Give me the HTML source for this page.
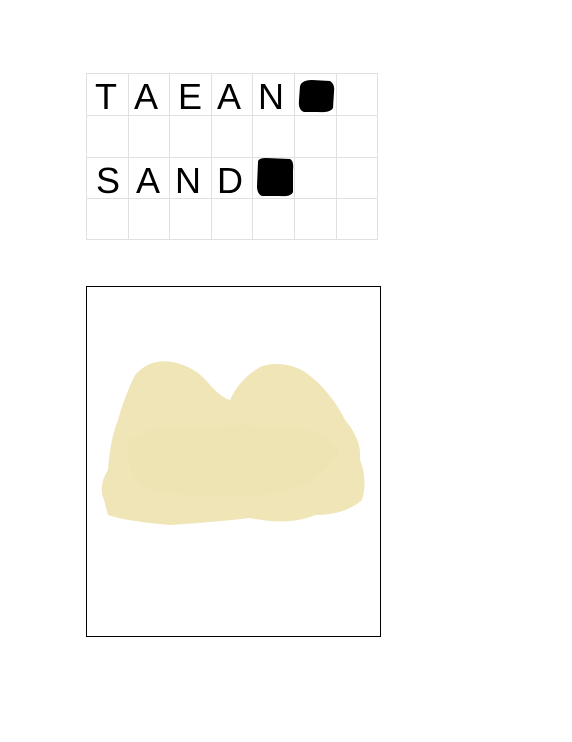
<!DOCTYPE html>
<html><head><style>
html,body{margin:0;padding:0;background:#fff;width:572px;height:742px;overflow:hidden}
</style></head><body>
<svg width="572" height="742" viewBox="0 0 572 742" xmlns="http://www.w3.org/2000/svg">
<g stroke="#e0e0e0" stroke-width="1" fill="none">
<rect x="86.5" y="73.5" width="291" height="166"/>
<line x1="128.5" y1="73" x2="128.5" y2="240"/>
<line x1="169.5" y1="73" x2="169.5" y2="240"/>
<line x1="211.5" y1="73" x2="211.5" y2="240"/>
<line x1="252.5" y1="73" x2="252.5" y2="240"/>
<line x1="294.5" y1="73" x2="294.5" y2="240"/>
<line x1="336.5" y1="73" x2="336.5" y2="240"/>
<line x1="86" y1="115.5" x2="378" y2="115.5"/>
<line x1="86" y1="157.5" x2="378" y2="157.5"/>
<line x1="86" y1="198.5" x2="378" y2="198.5"/>
</g>
<g font-family="Liberation Sans, sans-serif" font-size="36" fill="#000" text-anchor="middle">
<text x="106" y="109">T</text>
<text x="146" y="109">A</text>
<text x="190" y="109">E</text>
<text x="229" y="109">A</text>
<text x="271" y="109">N</text>
<text x="108" y="193">S</text>
<text x="148" y="193">A</text>
<text x="188" y="193">N</text>
<text x="230" y="193">D</text>
</g>
<path d="M300 86 Q302 80 312 80 L330 81 Q335 84 334 92 L333 108 Q330 113 318 112 L304 112 Q298 110 299 100 Z" fill="#000"/>
<path d="M258 162 Q258 158 266 158 L290 159 Q294 161 293 170 L293 192 Q291 197 280 196 L262 196 Q257 194 257 186 Z" fill="#000"/>
<rect x="86.5" y="286.5" width="294" height="350" fill="none" stroke="#000" stroke-width="1"/>
<path d="M104 500 Q98 485 108 470 Q110 440 118 420 Q125 395 135 375 Q150 358 172 362 Q195 366 210 385 Q222 398 230 400 Q240 378 262 366 Q285 360 305 372 Q330 390 345 420 Q362 440 360 460 Q368 480 362 500 Q345 515 315 515 Q290 526 250 518 Q215 522 170 525 Q130 522 108 515 Z" fill="#efe5b6"/>
<path d="M130 440 Q160 420 200 430 Q240 420 280 430 Q320 425 340 450 Q320 490 260 495 Q200 500 150 490 Q120 470 130 440 Z" fill="#ede2b0" opacity="0.6"/>
</svg>
</body></html>
